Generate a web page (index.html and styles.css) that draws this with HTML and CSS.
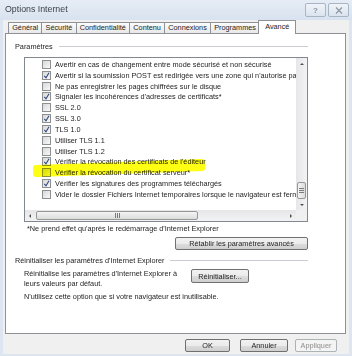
FILE: index.html
```html
<!DOCTYPE html>
<html lang="fr">
<head>
    <meta charset="UTF-8">
    <title>Options Internet</title>
    <link rel="stylesheet" href="styles.css">
</head>
<body>
<div class="window">
    <div class="titlebar">
        <span class="title">Options Internet</span>
        <div class="caption-buttons">
            <span class="cap-btn">?</span>
            <span class="cap-btn">
                <svg width="8" height="7" viewBox="0 0 8 7"><path d="M1 0.5 L7 6.5 M7 0.5 L1 6.5" stroke="#8a93a0" stroke-width="1.1" fill="none"/></svg>
            </span>
        </div>
    </div>
    <div class="client">
        <div class="tabs">
            <span class="tab">Général</span>
            <span class="tab">Sécurité</span>
            <span class="tab">Confidentialité</span>
            <span class="tab">Contenu</span>
            <span class="tab">Connexions</span>
            <span class="tab">Programmes</span>
            <span class="tab active">Avancé</span>
        </div>
        <div class="panel">
            <div class="group-head"><span>Paramètres</span><i class="rule"></i></div>
            <div class="listbox">
                <div class="list">
                    <div class="item"><span class="check"></span>Avertir en cas de changement entre mode sécurisé et non sécurisé</div>
                    <div class="item"><span class="check on"></span>Avertir si la soumission POST est redirigée vers une zone qui n'autorise pas les envois</div>
                    <div class="item"><span class="check"></span>Ne pas enregistrer les pages chiffrées sur le disque</div>
                    <div class="item"><span class="check on"></span>Signaler les incohérences d'adresses de certificats*</div>
                    <div class="item"><span class="check"></span>SSL 2.0</div>
                    <div class="item"><span class="check on"></span>SSL 3.0</div>
                    <div class="item"><span class="check on"></span>TLS 1.0</div>
                    <div class="item"><span class="check"></span>Utiliser TLS 1.1</div>
                    <div class="item"><span class="check"></span>Utiliser TLS 1.2</div>
                    <div class="item"><span class="check on"></span>Vérifier la révocation des certificats de l'éditeur</div>
                    <div class="item"><span class="check"></span>Vérifier la révocation du certificat serveur*</div>
                    <div class="item"><span class="check on"></span>Vérifier les signatures des programmes téléchargés</div>
                    <div class="item"><span class="check"></span>Vider le dossier Fichiers Internet temporaires lorsque le navigateur est fermé</div>
                    <div class="marker"></div>
                </div>
                <div class="vscroll">
                    <span class="arrow up"></span>
                    <span class="track"><span class="thumb v"></span></span>
                    <span class="arrow down"></span>
                </div>
                <div class="hscroll">
                    <span class="arrow left"></span>
                    <span class="track"><span class="thumb h"></span></span>
                    <span class="arrow right"></span>
                </div>
                <div class="corner"></div>
            </div>
            <p class="note">*Ne prend effet qu'après le redémarrage d'Internet Explorer</p>
            <div class="row-end"><span class="btn restore">Rétablir les paramètres avancés</span></div>
            <div class="group-head second"><span>Réinitialiser les paramètres d'Internet Explorer</span><i class="rule"></i></div>
            <div class="reset-row">
                <p>Réinitialise les paramètres d'Internet Explorer à<br>leurs valeurs par défaut.</p>
                <span class="btn reset">Réinitialiser...</span>
            </div>
            <p class="hint">N'utilisez cette option que si votre navigateur est inutilisable.</p>
        </div>
        <div class="footer-buttons">
            <span class="btn ok">OK</span>
            <span class="btn cancel">Annuler</span>
            <span class="btn apply disabled">Appliquer</span>
        </div>
    </div>
</div>
</body>
</html>
```

FILE: styles.css
```css
* {
    box-sizing: border-box;
}
body {
    margin: 0;
    width: 352px;
    height: 356px;
    overflow: hidden;
    font-family: 'Liberation Sans', Arial, sans-serif;
    font-size: 7.3px;
    color: #1e1e1e;
    background: #dde6f0;
}
p {
    margin: 0;
}
.window {
    height: 356px;
    display: flex;
    flex-direction: column;
}
.titlebar {
    height: 20px;
    display: flex;
    justify-content: space-between;
    padding: 0 3px 0 5px;
    background: linear-gradient(#e6edf5, #d8e3ef);
}
.title {
    font-size: 8.8px;
    line-height: 18px;
    color: #3a3f46;
}
.caption-buttons {
    display: flex;
    gap: 2px;
    margin-top: 3px;
}
.cap-btn {
    width: 21px;
    height: 14px;
    border: 1px solid #a8b5c5;
    border-radius: 2px;
    background: linear-gradient(#f0f4f9, #dbe4ee);
    display: flex;
    align-items: center;
    justify-content: center;
    color: #8a93a0;
    font-size: 8px;
    font-weight: bold;
}
.client {
    flex: 1;
    margin: 0 3px 2px 3px;
    padding: 0 3px 0 2px;
    background: #f0f0f0;
    display: flex;
    flex-direction: column;
}
.tabs {
    display: flex;
    align-items: flex-end;
    height: 13px;
    margin-left: 3px;
    position: relative;
    z-index: 1;
}
.tab {
    height: 11px;
    padding: 0 3.2px;
    margin-right: -1px;
    border: 1px solid #8e9196;
    border-bottom: none;
    background: linear-gradient(#fbfbfb, #e8e8e8);
    line-height: 10px;
    white-space: nowrap;
}
.tab.active {
    height: 14px;
    margin-bottom: -1px;
    margin-left: -1px;
    padding: 0 6px;
    background: #fff;
    line-height: 11px;
}
.panel {
    height: 301px;
    border: 1px solid #8e9196;
    background: #fff;
    padding: 6px 37px 0 9px;
    display: flex;
    flex-direction: column;
}
.group-head {
    display: flex;
    align-items: center;
    height: 12px;
    color: #222;
}
.group-head .rule {
    flex: 1;
    height: 1px;
    margin-left: 6px;
    background: #c9cdd2;
}
.group-head.second {
    margin-top: 4px;
}
.listbox {
    margin: 5px 0 0 9px;
    height: 165px;
    border: 1px solid #828790;
    display: grid;
    grid-template-columns: 1fr 11px;
    grid-template-rows: 1fr 11px;
    overflow: hidden;
}
.list {
    position: relative;
    padding: 1px 0 0 17px;
    overflow: hidden;
    white-space: nowrap;
}
.item {
    display: flex;
    align-items: center;
    height: 10.83px;
}
.check {
    width: 9px;
    height: 9px;
    margin-right: 4px;
    flex: none;
    border: 1px solid #8e8f8f;
    background: linear-gradient(135deg, #d5d8dc, #f8f8f8);
}
.check.on {
    background-image: url("data:image/svg+xml;utf8,<svg xmlns='http://www.w3.org/2000/svg' width='7' height='7'><path d='M1.3 3.8 L3 5.9 L6 0.8' stroke='%23344a7c' stroke-width='1.1' fill='none'/></svg>"), linear-gradient(135deg, #d5d8dc, #f8f8f8);
    background-repeat: no-repeat;
}
.marker {
    position: absolute;
    left: 8px;
    top: 104px;
    width: 172px;
    height: 12px;
    border-radius: 3px;
    background: #ffff14;
    mix-blend-mode: multiply;
    transform: rotate(-2deg);
}
.vscroll, .hscroll {
    display: flex;
    background: linear-gradient(90deg, #e6e6e9, #f3f3f5);
}
.vscroll {
    flex-direction: column;
}
.hscroll {
    background: linear-gradient(#e6e6e9, #f3f3f5);
}
.track {
    flex: 1;
    display: flex;
}
.vscroll .track {
    flex-direction: column;
    justify-content: flex-end;
}
.arrow {
    width: 11px;
    height: 11px;
    flex: none;
    position: relative;
}
.arrow::after {
    content: "";
    position: absolute;
    left: 3.5px;
    top: 4px;
    border: 2px solid transparent;
}
.arrow.up::after {
    border-bottom: 2.5px solid #505050;
    top: 2.5px;
}
.arrow.down::after {
    border-top: 2.5px solid #505050;
    top: 5px;
}
.arrow.left::after {
    border-right: 2.5px solid #505050;
    left: 2px;
    top: 3.5px;
}
.arrow.right::after {
    border-left: 2.5px solid #505050;
    left: 5px;
    top: 3.5px;
}
.thumb {
    border: 1px solid #979797;
    border-radius: 2px;
    background: linear-gradient(90deg, #f4f4f4, #dcdcdc);
    display: flex;
    align-items: center;
    justify-content: center;
}
.thumb.v {
    height: 17px;
    margin: 0 1px;
}
.thumb.v::after {
    content: "";
    width: 5px;
    height: 5px;
    background: repeating-linear-gradient(#7a7a7a 0 1px, transparent 1px 2px);
}
.thumb.h {
    width: 162px;
    margin: 1px 0;
    background: linear-gradient(#f4f4f4, #dcdcdc);
}
.thumb.h::after {
    content: "";
    width: 5px;
    height: 5px;
    background: repeating-linear-gradient(90deg, #7a7a7a 0 1px, transparent 1px 2px);
}
.corner {
    background: #f0f0f0;
}
.note {
    margin: 2px 0 0 12px;
    line-height: 10px;
}
.row-end {
    display: flex;
    justify-content: flex-end;
    margin-top: 3px;
}
.btn {
    display: flex;
    align-items: center;
    justify-content: center;
    height: 13px;
    border: 1px solid #707070;
    border-radius: 2px;
    background: linear-gradient(#f2f2f2 0%, #ebebeb 50%, #dddddd 51%, #cfcfcf 100%);
    color: #1e1e1e;
    white-space: nowrap;
}
.btn.restore {
    width: 133px;
}
.reset-row {
    display: flex;
    align-items: flex-start;
    margin: 3px 0 0 9px;
}
.reset-row p {
    width: 167px;
    line-height: 9.5px;
}
.btn.reset {
    width: 58px;
    height: 14px;
}
.hint {
    margin: 4px 0 0 9px;
    line-height: 10px;
}
.footer-buttons {
    display: flex;
    justify-content: flex-end;
    padding: 5px 9px 0 0;
}
.btn.ok {
    width: 45px;
    margin-right: 10px;
}
.btn.cancel {
    width: 48px;
    margin-right: 7px;
}
.btn.apply {
    width: 42px;
}
.btn.disabled {
    border-color: #adb2b5;
    background: #f4f4f4;
    color: #8d8d8d;
}
```
